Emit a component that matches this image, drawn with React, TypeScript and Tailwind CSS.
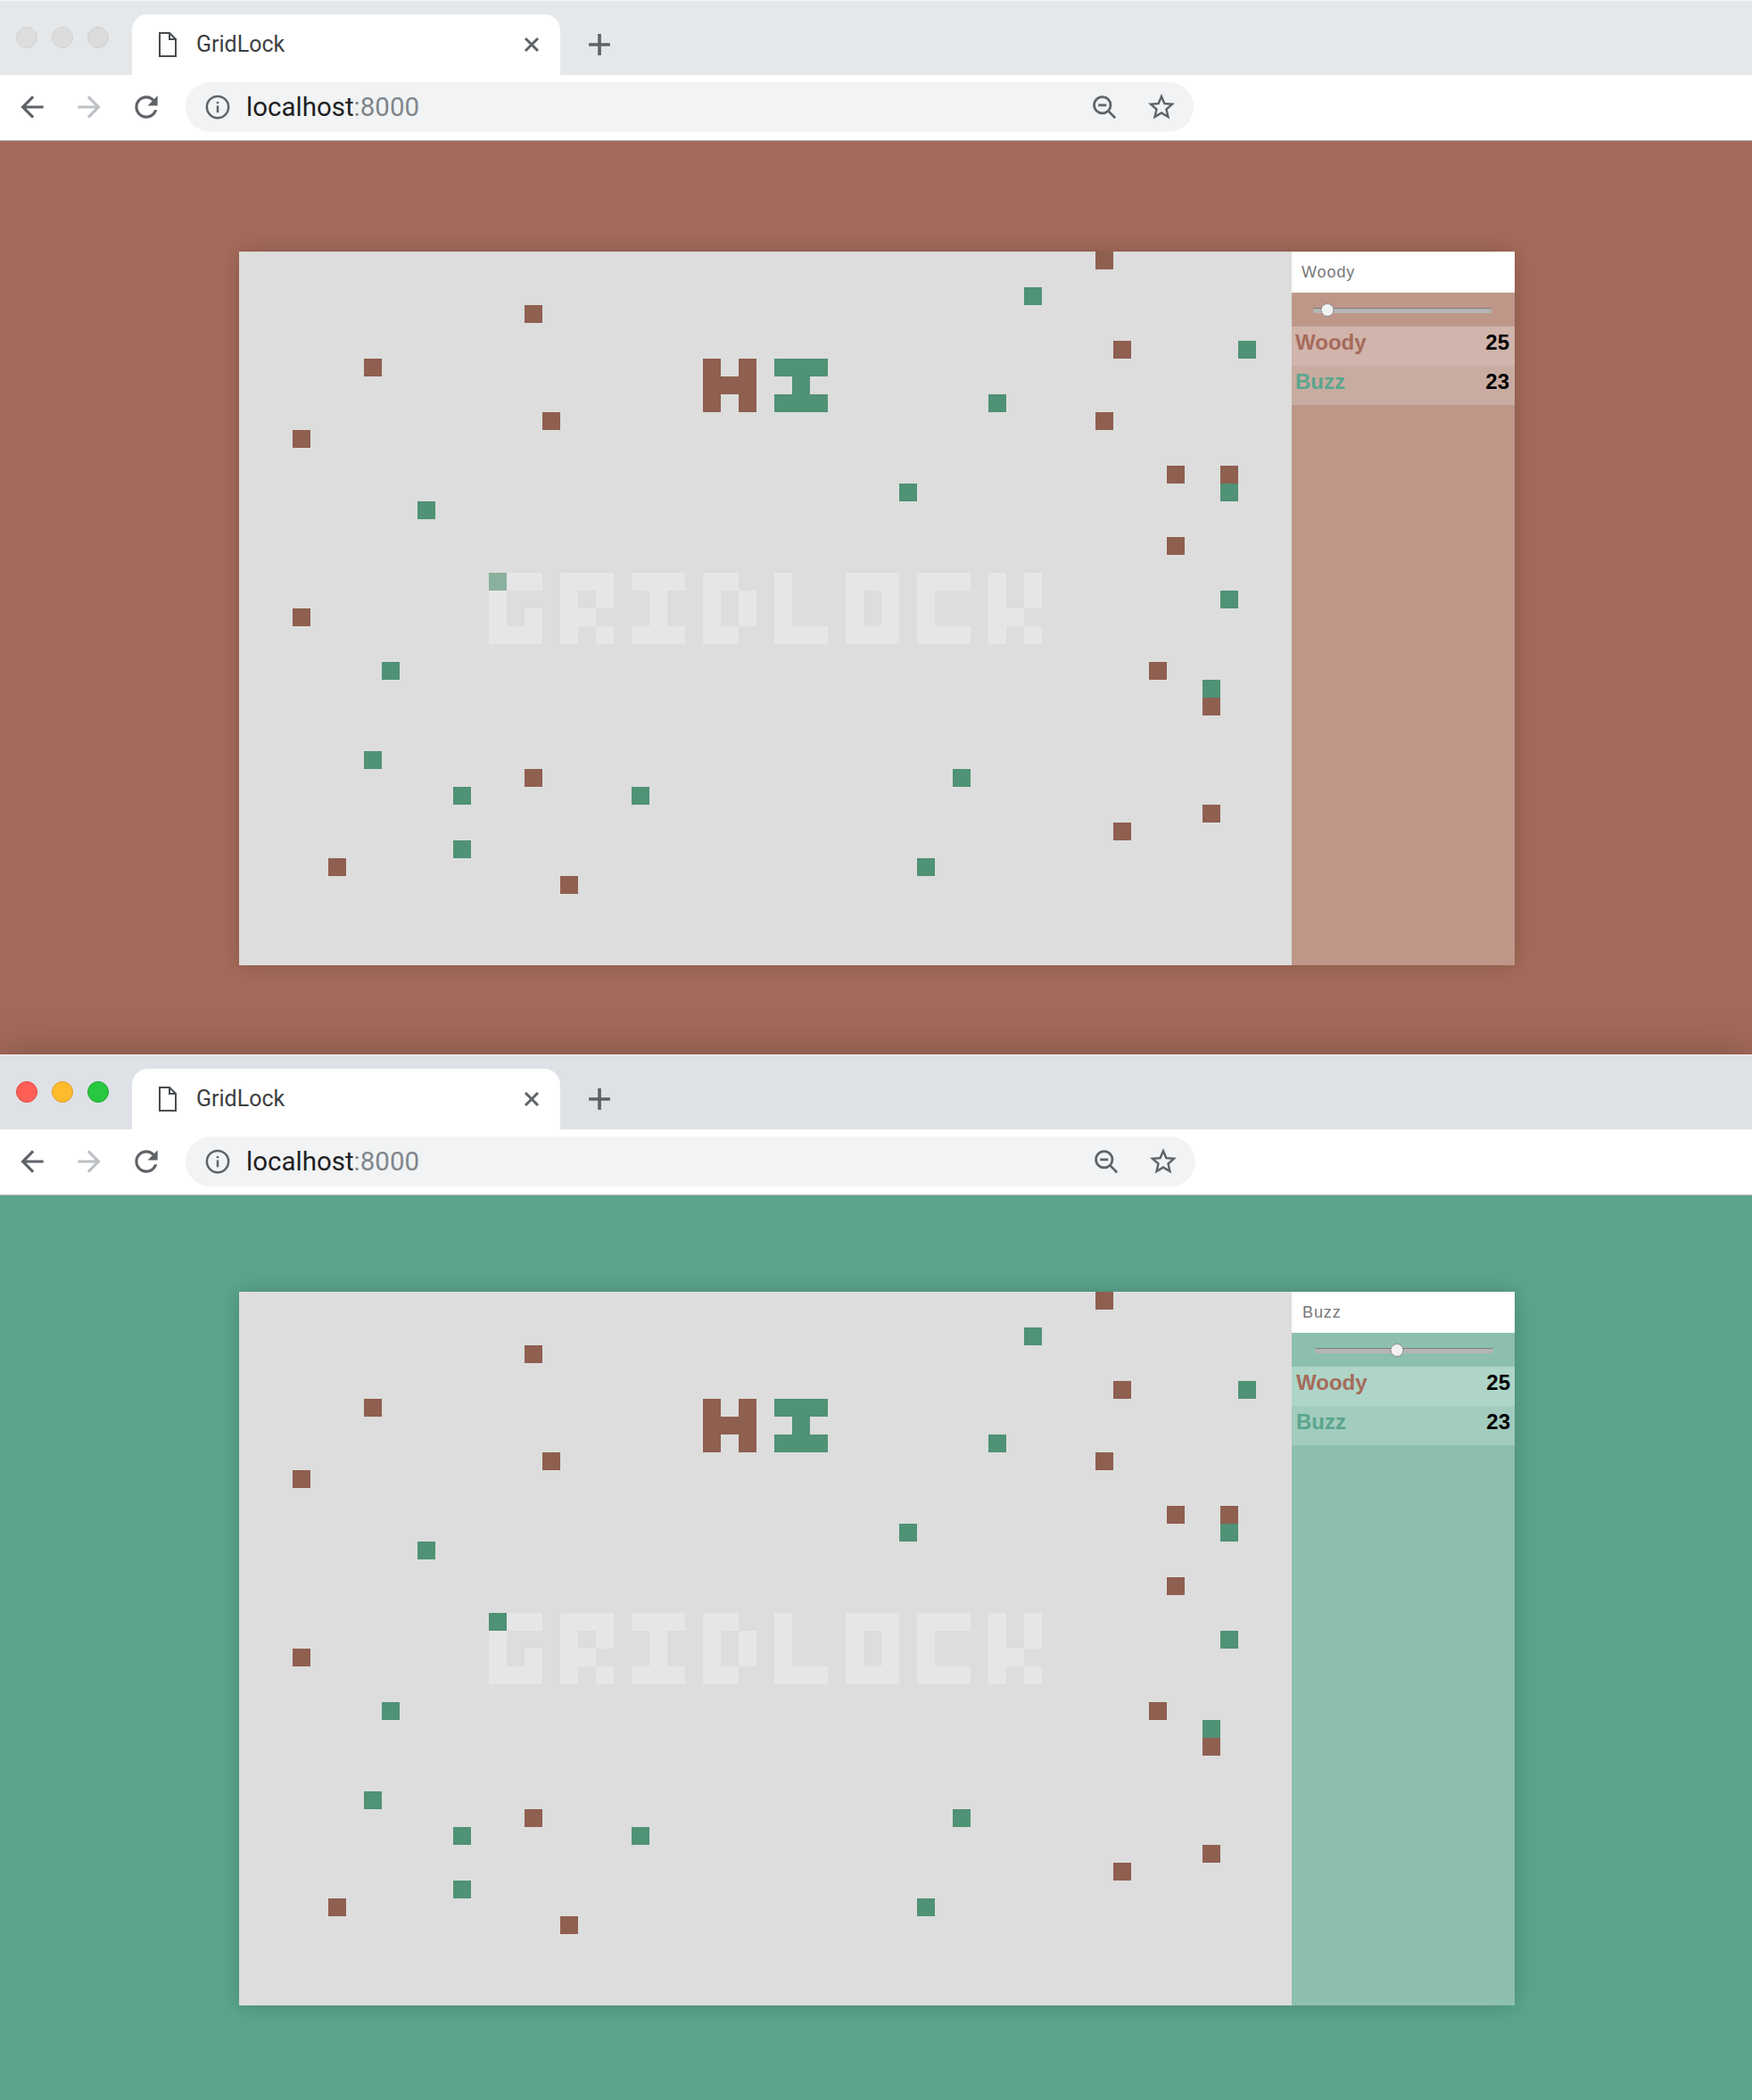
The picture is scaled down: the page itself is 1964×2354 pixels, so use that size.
import { ReactNode } from 'react';

type Cell = [number, number];

const brownDots: Cell[] = [
  [48, 0], [16, 3], [7, 6], [49, 5], [17, 9], [3, 10], [48, 9], [52, 12], [55, 12], [52, 16],
  [3, 20], [51, 23], [54, 25], [16, 29], [54, 31], [49, 32], [5, 34], [18, 35],
];

const greenDots: Cell[] = [
  [44, 2], [56, 5], [42, 8], [37, 13], [55, 13], [10, 14], [55, 19], [8, 23], [54, 24], [7, 28],
  [12, 30], [22, 30], [40, 29], [12, 33], [38, 34],
];

// 3 wide glyphs, drawn on the board itself
const glyphs: Record<string, string[]> = {
  G: ['XXX', 'X..', 'X.X', 'XXX'],
  R: ['XXX', 'X.X', 'XX.', 'X.X'],
  I: ['XXX', '.X.', '.X.', 'XXX'],
  D: ['XX.', 'X.X', 'X.X', 'XX.'],
  L: ['X..', 'X..', 'X..', 'XXX'],
  O: ['XXX', 'X.X', 'X.X', 'XXX'],
  C: ['XXX', 'X..', 'X..', 'XXX'],
  K: ['X.X', 'X.X', 'XX.', 'X.X'],
};

const glyphCells = (rows: string[], col: number, row: number) => {
  const cells: Cell[] = [];
  rows.forEach((line, y) => {
    line.split('').forEach((c, x) => {
      if (c === 'X') cells.push([col + x, row + y]);
    });
  });
  return cells;
};

const titleCells = 'GRIDLOCK'.split('').flatMap((letter, i) => glyphCells(glyphs[letter], 14 + i * 4, 18));
const hCells = glyphCells(['X.X', 'XXX', 'X.X'], 26, 6);
const iCells = glyphCells(['XXX', '.X.', 'XXX'], 30, 6);

const Dots = ({ cells, className }: { cells: Cell[]; className: string }) => (
  <>
    {cells.map(([col, row]) => (
      <div key={`${col}-${row}`} className={className} style={{ gridColumnStart: col + 1, gridRowStart: row + 1 }} />
    ))}
  </>
);

const Board = ({ previewClass }: { previewClass: string }) => (
  <div className="grid w-[1180px] h-[800px] grid-cols-[repeat(59,20px)] grid-rows-[repeat(40,20px)] bg-[#dddddd]">
    <Dots cells={titleCells} className="bg-[#e6e6e6]" />
    <Dots cells={[[14, 18]]} className={previewClass} />
    <Dots cells={[...brownDots, ...hCells]} className="bg-[#8f5f4f]" />
    <Dots cells={[...greenDots, ...iCells]} className="bg-[#4f9275]" />
  </div>
);

const Slider = ({ percent, className }: { percent: number; className: string }) => (
  <div className={`relative mt-[2px] h-[6px] w-[200px] rounded-[2px] border-t border-t-[#7d7d7d] bg-[#b5b5b5] ${className}`}>
    <div
      className="absolute top-[-6px] h-[15px] w-[15px] -translate-x-1/2 rounded-full border border-[#8e8e8e] bg-[#f1f1f1]"
      style={{ left: `${percent}%` }}
    />
  </div>
);

type SidebarProps = {
  player: string;
  percent: number;
  panelClass: string;
  oddRowClass: string;
  evenRowClass: string;
  sliderClass: string;
  rowPad: string;
  headerPad: string;
};

const Sidebar = ({ player, percent, panelClass, oddRowClass, evenRowClass, sliderClass, rowPad, headerPad }: SidebarProps) => (
  <div className={`flex w-[250px] flex-col ${panelClass}`}>
    <div className={`flex h-[46px] items-center bg-white text-[18px] tracking-[0.9px] text-[#777777] ${headerPad}`}>
      {player}
    </div>
    <div className="flex h-[38px] items-center">
      <Slider percent={percent} className={sliderClass} />
    </div>
    <div className={`flex h-[44px] items-center justify-between pb-[9px] text-[24px] font-bold ${rowPad} ${oddRowClass}`}>
      <span className="text-[#a56b5a]">Woody</span>
      <span className="text-black">25</span>
    </div>
    <div className={`flex h-[44px] items-center justify-between pb-[9px] text-[24px] font-bold ${rowPad} ${evenRowClass}`}>
      <span className="text-[#5ba58e]">Buzz</span>
      <span className="text-black">23</span>
    </div>
  </div>
);

const Icon = ({ size, children, className }: { size: number; children: ReactNode; className?: string }) => (
  <svg width={size} height={size} viewBox="0 0 24 24" className={className}>
    {children}
  </svg>
);

const Chrome = ({ stripClass, lights, addressWidth }: { stripClass: string; lights: string[]; addressWidth: string }) => (
  <div className="flex flex-col bg-white">
    <div className={`flex h-[84px] items-end border-t border-t-[#f4f5f6] ${stripClass}`}>
      <div className="flex h-[83px] w-[148px] shrink-0 items-center gap-4 pb-[1px] pl-[18px]">
        {lights.map((light) => (
          <div key={light} className={`h-6 w-6 rounded-full border ${light}`} />
        ))}
      </div>
      <div className="flex h-[68px] w-[480px] shrink-0 items-center rounded-t-[18px] bg-white pl-[30px] pr-[20px]">
        <svg width="20" height="28" viewBox="0 0 20 28" className="shrink-0">
          <path d="M1 1H12L19 8V27H1Z M12 1V8H19" fill="none" stroke="#494c50" strokeWidth="2" />
        </svg>
        <span className="ml-[22px] flex-1 font-['Roboto'] text-[25px] text-[#3c4043]">GridLock</span>
        <Icon size={24}>
          <path d="M5 5L19 19M19 5L5 19" stroke="#5f6368" strokeWidth="3" />
        </Icon>
      </div>
      <div className="flex h-[68px] w-[88px] items-center justify-center">
        <Icon size={26}>
          <path d="M12 1V23M1 12H23" stroke="#5f6368" strokeWidth="3.4" />
        </Icon>
      </div>
    </div>
    <div className="flex h-[74px] items-center border-b border-b-[#b5b5b5] pb-[1px] pl-[17px]">
      <Icon size={38} className="shrink-0">
        <path d="M20 11H7.83l5.59-5.59L12 4l-8 8 8 8 1.41-1.41L7.83 13H20v-2z" fill="#5f6368" />
      </Icon>
      <Icon size={38} className="ml-[26px] shrink-0">
        <path d="M4 11h12.17l-5.59-5.59L12 4l8 8-8 8-1.41-1.41L16.17 13H4v-2z" fill="#bdc1c6" />
      </Icon>
      <Icon size={38} className="ml-[26px] shrink-0">
        <path
          d="M17.65 6.35C16.2 4.9 14.21 4 12 4c-4.42 0-7.99 3.58-7.99 8s3.57 8 7.99 8c3.73 0 6.84-2.55 7.73-6h-2.08c-.82 2.33-3.04 4-5.65 4-3.31 0-6-2.69-6-6s2.69-6 6-6c1.66 0 3.14.69 4.22 1.78L13 11h7V4l-2.35 2.35z"
          fill="#5f6368"
        />
      </Icon>
      <div className={`ml-[25px] flex h-14 items-center rounded-full bg-[#f1f3f4] pl-[21px] ${addressWidth}`}>
        <Icon size={30} className="shrink-0">
          <circle cx="12" cy="12" r="9.7" fill="none" stroke="#5f6368" strokeWidth="2" />
          <path d="M12 7.2V9M12 10.8V17" stroke="#5f6368" strokeWidth="2" />
        </Icon>
        <span className="ml-[17px] flex-1 font-['Roboto'] text-[29.5px] text-[#202124]">
          localhost<span className="text-[#80868b]">:8000</span>
        </span>
        <Icon size={33} className="shrink-0">
          <circle cx="10" cy="10" r="6.7" fill="none" stroke="#5f6368" strokeWidth="2" />
          <path d="M6.7 10H13.3M15 15L20.5 20.5" stroke="#5f6368" strokeWidth="2" />
        </Icon>
        <Icon size={36} className="ml-[29px] mr-[18px] shrink-0">
          <path
            d="M22 9.24l-7.19-.62L12 2 9.19 8.63 2 9.24l5.46 4.73L5.82 21 12 17.27 18.18 21l-1.63-7.03L22 9.24zM12 15.4l-3.76 2.27 1-4.28-3.32-2.88 4.38-.38L12 6.1l1.71 4.04 4.38.38-3.32 2.88 1 4.28L12 15.4z"
            fill="#5f6368"
          />
        </Icon>
      </div>
    </div>
  </div>
);

export default function App() {
  return (
    <div className="flex w-[1964px] flex-col font-['Liberation_Sans',sans-serif]">
      <Chrome
        stripClass="bg-[#e5e8eb]"
        lights={['bg-[#dddddd] border-[#d2d2d2]', 'bg-[#dcdcdc] border-[#d1d1d1]', 'bg-[#dbdbdb] border-[#d0d0d0]']}
        addressWidth="w-[1130px]"
      />
      <div className="flex h-[1024px] bg-[#a56b5a] pl-[268px] pt-[124px]">
        <div className="flex h-[800px] shadow-[0_0_22px_rgba(0,0,0,0.2)]">
          <Board previewClass="bg-[#8ab19d]" />
          <Sidebar
            player="Woody"
            percent={8}
            panelClass="bg-[#bf9788]"
            oddRowClass="bg-[#d1b4ab]"
            evenRowClass="bg-[#c9aca1]"
            sliderClass="ml-[24px]"
            rowPad="pl-[4px] pr-[6px]"
            headerPad="pl-[11px]"
          />
        </div>
      </div>
      {/* shadow only shows above: the teal page paints over the part below */}
      <div className="shadow-[0_0_50px_rgba(0,0,0,0.25)]">
        <Chrome
          stripClass="bg-[#dee1e6]"
          lights={['bg-[#ff5f57] border-[#e5463f]', 'bg-[#febb2e] border-[#e0a028]', 'bg-[#28c840] border-[#1fa833]']}
          addressWidth="w-[1132px]"
        />
      </div>
      <div className="flex h-[1014px] bg-[#5ba58e] pl-[268px] pt-[108px]">
        <div className="flex h-[800px] shadow-[0_0_22px_rgba(0,0,0,0.2)]">
          <Board previewClass="bg-[#4f9275]" />
          <Sidebar
            player="Buzz"
            percent={46}
            panelClass="bg-[#8dbfae]"
            oddRowClass="bg-[#aed5c8]"
            evenRowClass="bg-[#a1ccbe]"
            sliderClass="ml-[26px]"
            rowPad="pl-[5px] pr-[5px]"
            headerPad="pl-[12px]"
          />
        </div>
      </div>
    </div>
  );
}
